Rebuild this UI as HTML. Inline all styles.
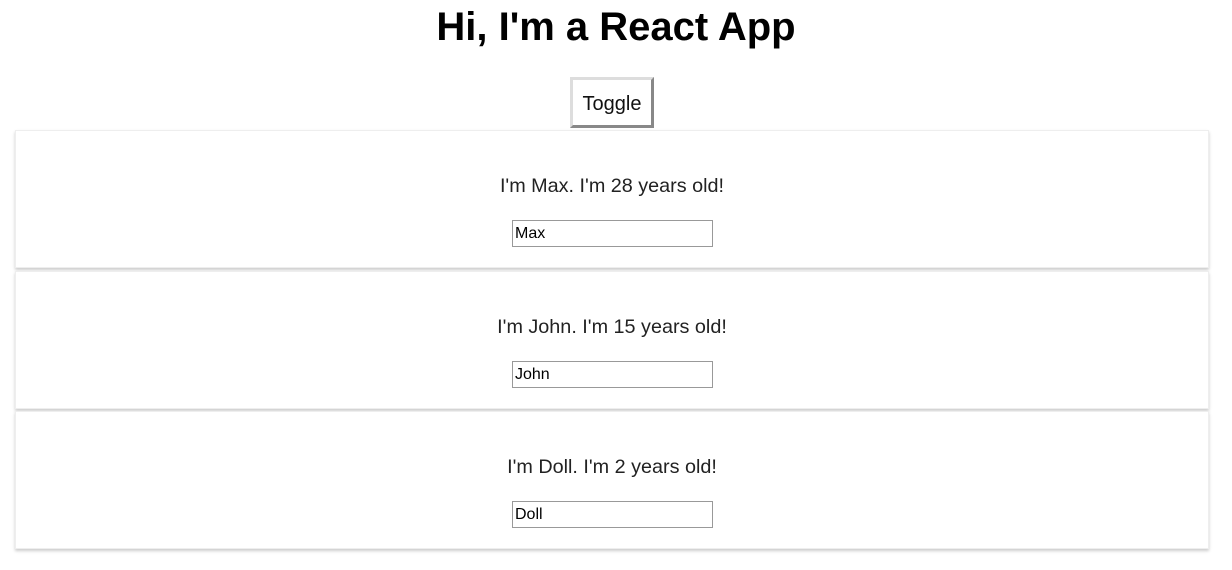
<!DOCTYPE html>
<html><head><style>
body{margin:0;background:#fff;font-family:"Liberation Sans",sans-serif;text-align:center;}
h1{margin:0;position:absolute;top:2px;left:0;right:0;font-size:40px;font-weight:bold;line-height:50px;}
.btn{position:absolute;left:570px;top:77px;width:84px;height:51px;box-sizing:border-box;border:3px solid;border-color:#ddd #888 #888 #ddd;background:#fff;font-size:20px;line-height:48px;color:#111;}
.card{position:absolute;left:15px;width:1194px;height:138px;box-shadow:0 2px 3px #ccc;border:1px solid #eee;box-sizing:border-box;background:#fff;}
.card p{margin:0;position:absolute;top:43px;left:0;right:0;font-size:19.8px;color:#222;line-height:24px;}
.card .in{position:absolute;left:496px;top:89px;width:201px;height:27px;box-sizing:border-box;border:1px solid #999;text-align:left;font-family:"Liberation Sans",Arial,sans-serif;font-size:16px;line-height:25px;padding-left:2px;}
</style></head><body>
<h1>Hi, I'm a React App</h1>
<div class="btn">Toggle</div>
<div class="card" style="top:130px"><p>I'm Max. I'm 28 years old!</p><div class="in">Max</div></div>
<div class="card" style="top:271px"><p>I'm John. I'm 15 years old!</p><div class="in">John</div></div>
<div class="card" style="top:411px"><p>I'm Doll. I'm 2 years old!</p><div class="in">Doll</div></div>
</body></html>
